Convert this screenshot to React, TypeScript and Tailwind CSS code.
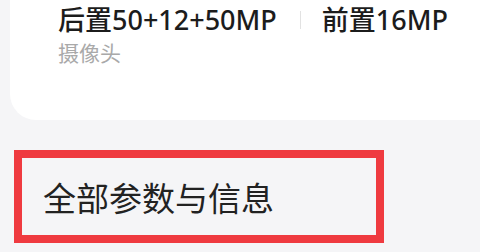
export default function App() {
  return (
    <div
      className="w-[480px] h-[252px] overflow-hidden bg-[#f5f5f7]"
      style={{ fontFamily: '"Noto Sans", "Noto Sans CJK SC", sans-serif' }}
    >
      {/* camera spec card */}
      <div className="ml-[10px] h-[120px] bg-white rounded-bl-[26px] pl-[48px] pt-[6px]">
        <div className="flex items-center text-[27px] leading-[27px] font-medium text-[#1c1c1c]">
          <span>后置50+12+50MP</span>
          <span className="ml-[23px] mr-[21px] w-px h-[18px] bg-[#e2e2e2]" />
          <span>前置16MP</span>
        </div>
        <div className="mt-[10px] text-[21px] leading-[21px] text-[#a9a9a9]">摄像头</div>
      </div>

      {/* all specs heading, highlighted */}
      <div className="mt-[30px] ml-[14px] w-[370px] h-[93px] border-[8px] border-[#ef3a40] flex items-center pl-[21px] pt-[3px]">
        <span className="text-[33px] leading-[33px] text-[#222]">全部参数与信息</span>
      </div>
    </div>
  );
}
